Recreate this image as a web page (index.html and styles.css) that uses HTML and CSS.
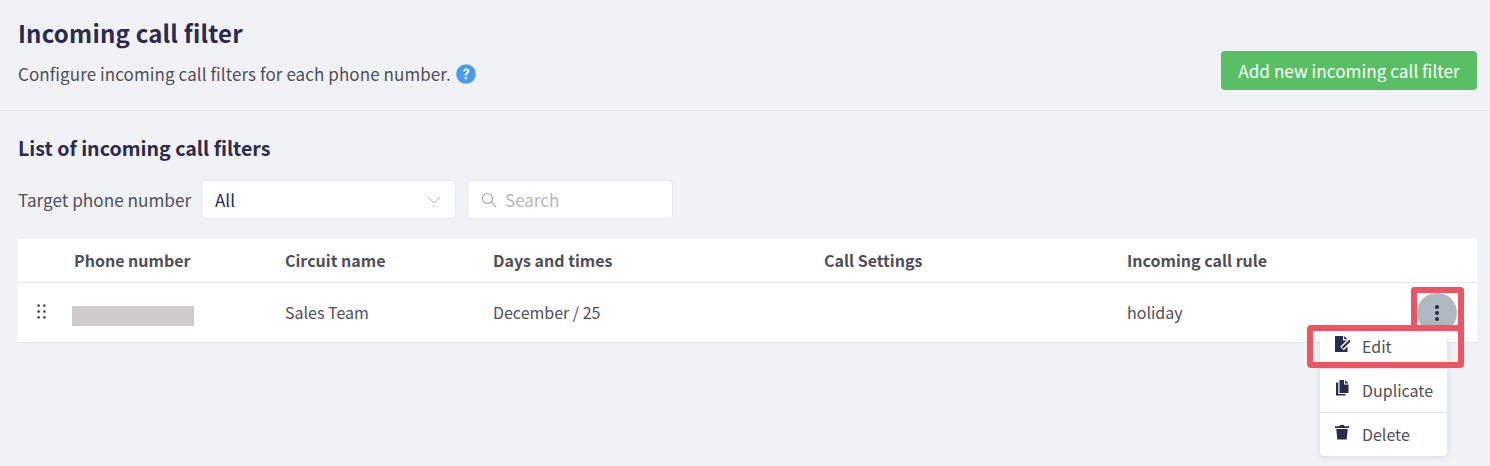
FILE: index.html
```html
<!DOCTYPE html>
<html lang="en">
<head>
<meta charset="utf-8">
<title>Incoming call filter</title>
<link rel="stylesheet" href="styles.css">
</head>
<body>
<header class="page-header">
  <div class="header-text">
    <h1 class="title">Incoming call filter</h1>
    <p class="subtitle">Configure incoming call filters for each phone number.
      <svg class="help" viewBox="0 0 20 20" aria-hidden="true"><circle cx="10" cy="10" r="9.8" fill="#4a9af0"/><path d="M6.9 7.6c.2-1.9 1.5-3 3.3-3 1.800 0 3.100 1.100 3.100 2.700 0 1.200-.6 1.900-1.600 2.500-.8.5-1 .8-1 1.600v.4H8.800v-.6c0-1.300.5-1.900 1.400-2.500.8-.5 1.100-.8 1.100-1.400 0-.6-.5-1-1.100-1-.7 0-1.200.4-1.300 1.300z" fill="#fff"/><rect x="8.700" y="13" width="2.300" height="2.300" rx=".4" fill="#fff"/></svg>
    </p>
  </div>
  <button class="add-btn">Add new incoming call filter</button>
</header>
<main class="content">
  <h2 class="section-title">List of incoming call filters</h2>
  <div class="filters">
    <span class="filter-label">Target phone number</span>
    <div class="select">
      <span>All</span>
      <svg class="chev" viewBox="0 0 14 8" aria-hidden="true"><path d="M1 1l6 6 6-6" fill="none" stroke="#b4b7be" stroke-width="1"/></svg>
    </div>
    <div class="search">
      <svg class="search-icon" viewBox="0 0 16 16" aria-hidden="true"><circle cx="6.500" cy="6.500" r="5" fill="none" stroke="#a9abb2" stroke-width="1.200"/><path d="M10.200 10.200l4.800 4.800" stroke="#a9abb2" stroke-width="1.200"/></svg>
      <span>Search</span>
    </div>
  </div>
  <div class="table">
    <div class="row head">
      <span></span><span>Phone number</span><span>Circuit name</span><span>Days and times</span><span>Call Settings</span><span>Incoming call rule</span><span></span>
    </div>
    <div class="row body">
      <span class="drag"><svg viewBox="0 0 9 15" aria-hidden="true"><g fill="#2a2b4d"><rect x=".5" y=".5" width="2.200" height="2.200"/><rect x="6.300" y=".5" width="2.200" height="2.200"/><rect x=".5" y="6.400" width="2.200" height="2.200"/><rect x="6.300" y="6.400" width="2.200" height="2.200"/><rect x=".5" y="12.300" width="2.200" height="2.200"/><rect x="6.300" y="12.300" width="2.200" height="2.200"/></g></svg></span>
      <span><span class="redacted"></span></span>
      <span>Sales Team</span><span>December / 25</span><span></span><span>holiday</span>
      <span class="kebab"><svg viewBox="0 0 4 16" aria-hidden="true"><g fill="#2a2b4d"><circle cx="2" cy="2" r="2"/><circle cx="2" cy="8" r="2"/><circle cx="2" cy="14" r="2"/></g></svg></span>
    </div>
  </div>
</main>
<div class="menu">
  <div class="menu-item">
    <svg class="mi" viewBox="0 0 18 16" aria-hidden="true"><path d="M0 0h8v4.500h4.500V16H0z" fill="#2a2b4d"/><path d="M9.200 0l3.300 3.300H9.200z" fill="#2a2b4d"/><path d="M7 12.500l8-8" stroke="#fff" stroke-width="5"/><path d="M7.500 12l7.500-7.500" stroke="#2a2b4d" stroke-width="2.200"/></svg>
    <span>Edit</span>
  </div>
  <div class="menu-item">
    <svg class="mi" viewBox="0 0 18 16" aria-hidden="true"><path d="M4.500 0H9v4.500h4.500V13h-9z" fill="#2a2b4d"/><path d="M10 0l3.500 3.500H10z" fill="#2a2b4d"/><path d="M3.300 2.500V14H10.500v1.500H1V2.500z" fill="#2a2b4d"/></svg>
    <span>Duplicate</span>
  </div>
  <div class="menu-item">
    <svg class="mi" viewBox="0 0 18 16" aria-hidden="true"><path d="M0 2.200H4.500L5 1h4l.5 1.200H14v1.800H0z" fill="#2a2b4d"/><path d="M1.300 5h11.400l-1 10.500H2.300z" fill="#2a2b4d"/></svg>
    <span>Delete</span>
  </div>
</div>
<div class="mark mark-kebab"></div>
<div class="mark mark-edit"></div>
</body>
</html>
```
FILE: styles.css
```css
* { box-sizing: border-box; }
html, body { margin: 0; height: 466px; overflow: hidden; }
body {
  position: relative;
  background: #f1f2f6;
  color: #4f5056;
  font-family: "Noto Sans CJK JP", "Noto Sans", sans-serif;
  font-size: 16px;
}
.page-header {
  height: 111px;
  padding: 0 13px 0 18px;
  border-bottom: 1px solid #e3e4e9;
  display: flex;
  justify-content: space-between;
}
.title {
  margin: 15px 0 0;
  font-size: 24px;
  line-height: 36px;
  font-weight: 700;
  letter-spacing: .2px;
  color: #2a2b4d;
}
.subtitle {
  margin: 11px 0 0;
  font-size: 17px;
  letter-spacing: .08px;
  line-height: 24px;
  display: flex;
  align-items: center;
  gap: 5px;
}
.help { width: 20px; height: 20px; }
.add-btn {
  margin-top: 51px;
  width: 256px;
  height: 39px;
  border: 0;
  border-radius: 4px;
  background: #58bf64;
  color: #fff;
  font: 400 17.2px/38px "Noto Sans CJK JP", sans-serif;
  padding: 0;
}
.content { padding: 0 13px 0 18px; }
.section-title {
  margin: 23px 0 0;
  font-size: 19.6px;
  line-height: 28px;
  font-weight: 700;
  color: #2a2b4d;
}
.filters {
  margin-top: 18px;
  display: flex;
  align-items: center;
  height: 39px;
}
.filter-label { width: 183px; font-size: 17.2px; }
.select, .search {
  height: 39px;
  background: #fff;
  border: 1px solid #e6e7ec;
  border-radius: 4px;
  display: flex;
  align-items: center;
}
.select {
  width: 255px;
  padding: 0 14px 0 13px;
  justify-content: space-between;
  color: #2a2b4d;
  font-size: 17px;
}
.chev { width: 14px; height: 8px; }
.search {
  width: 206px;
  margin-left: 11px;
  padding: 0 13px;
  gap: 8px;
  color: #b6b7bc;
  font-size: 17px;
}
.search-icon { width: 16px; height: 16px; }
.table {
  margin-top: 20px;
  background: #fff;
  border-bottom: 1px solid #e3e4e9;
}
.row {
  display: grid;
  grid-template-columns: 56px 211px 208px 331px 303px 1fr 40px;
  align-items: center;
  padding-bottom: 2px;
}
.head {
  height: 44px;
  border-bottom: 1px solid #e6e7ec;
  font-weight: 700;
  font-size: 16px;
}
.body { height: 59px; font-size: 16px; }
.drag { padding-left: 19px; display: flex; }
.drag svg { width: 9px; height: 15px; }
.redacted {
  display: block;
  width: 122px;
  height: 20px;
  margin: 9px 0 0 -2px;
  background: #cdcbcc;
}
.kebab {
  width: 40px;
  height: 40px;
  margin: 2px 0 0 -20px;
  border-radius: 50%;
  background: #b0b8c1;
  display: flex;
  align-items: center;
  justify-content: center;
}
.kebab svg { width: 4px; height: 16px; }
.menu {
  position: absolute;
  left: 1320px;
  top: 325px;
  width: 127px;
  height: 131px;
  background: #fff;
  border-radius: 4px;
  box-shadow: 0 1px 6px rgba(40, 40, 70, .12);
  display: flex;
  flex-direction: column;
}
.menu-item {
  flex: 1;
  display: flex;
  align-items: center;
  gap: 9px;
  padding: 0 0 2px 15px;
  font-size: 16px;
  border-bottom: 1px solid #e6e7ec;
}
.menu-item:last-child { border-bottom: 0; }
.mi { width: 18px; height: 16px; margin-top: -4px; }
.mark {
  position: absolute;
  border: 6px solid #ee5564;
  border-radius: 4px;
}
.mark-kebab { left: 1411px; top: 287px; width: 53px; height: 44px; border-bottom: 0; border-radius: 4px 4px 0 0; }
.mark-edit { left: 1307px; top: 325px; width: 157px; height: 43px; }
```
